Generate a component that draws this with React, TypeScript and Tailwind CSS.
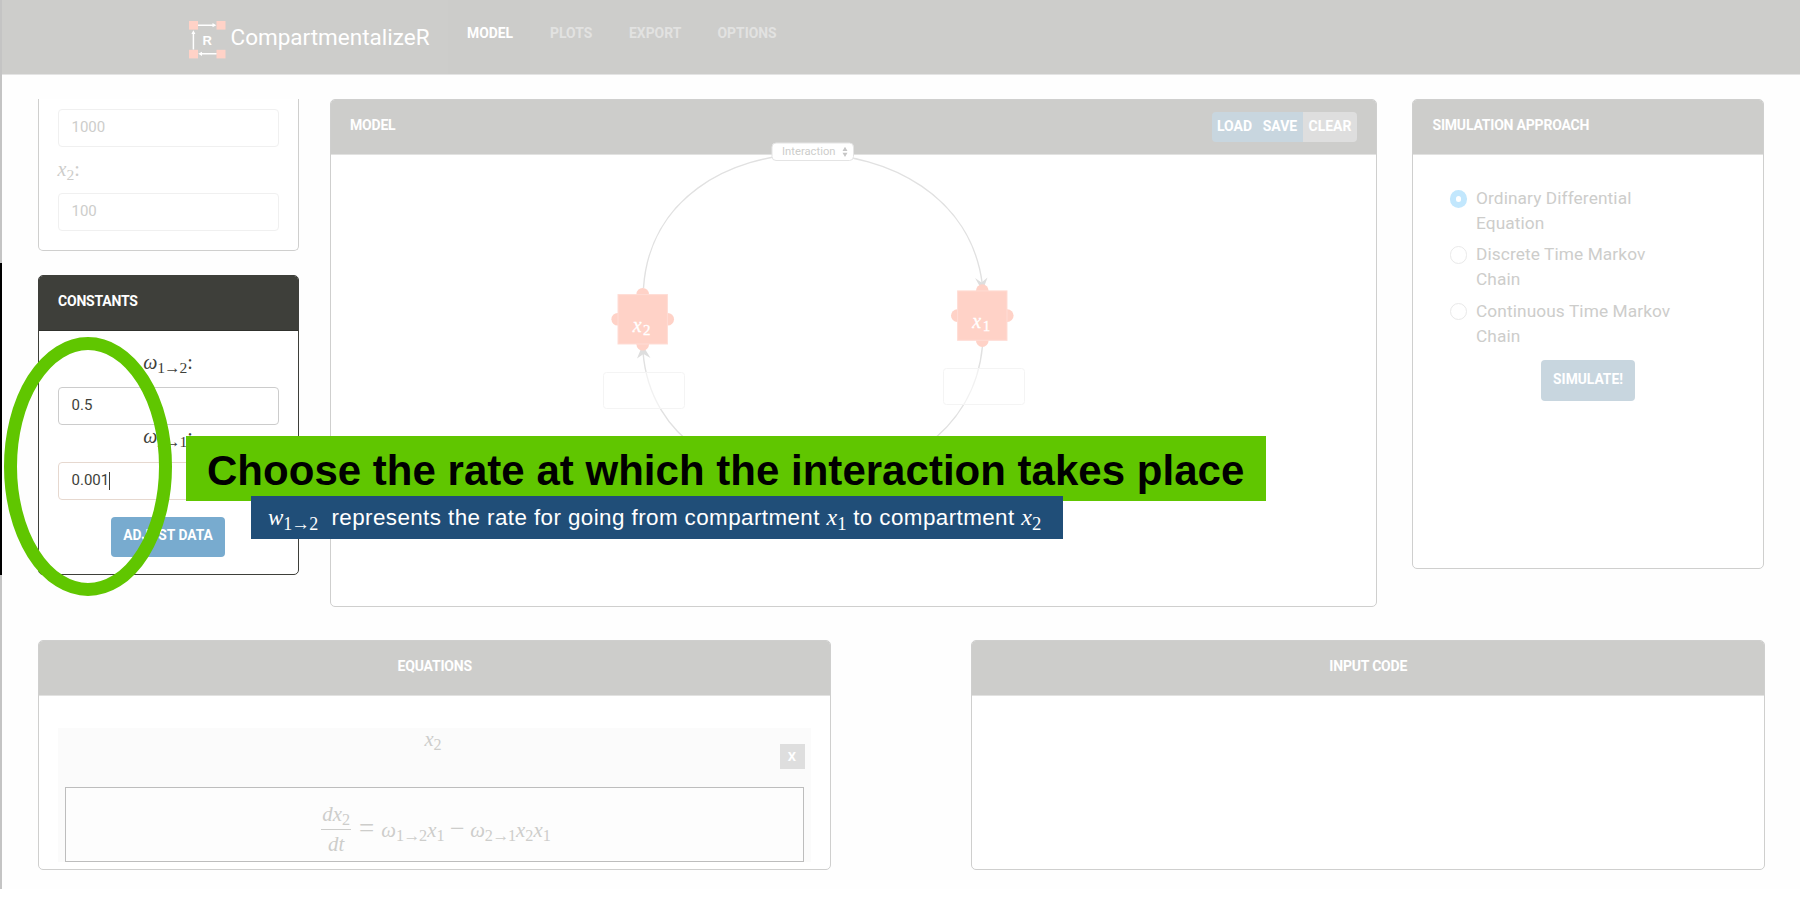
import type { ReactNode } from "react";

const SANS = "font-['Roboto','Liberation_Sans',sans-serif]";
const SERIF = "font-['Liberation_Serif',serif]";
const HELV = "font-['Liberation_Sans',sans-serif]";

function Sym({ base, sub, tail }: { base: string; sub: string; tail?: string }) {
  const [from, to] = sub.split("→");
  return (
    <span className={`${SERIF} whitespace-nowrap tracking-normal`}>
      <i>{base}</i>
      <sub className="text-[78%]">
        {from}
        {to && <span className="-mx-[1px] text-[105%]">→</span>}
        {to}
      </sub>
      {tail}
    </span>
  );
}

function Logo() {
  return (
    <svg width="37" height="38" viewBox="0 0 37 38" className="shrink-0">
      <g fill="#ffd2c7">
        <rect x="0" y="0" width="9" height="8.6" />
        <rect x="27.5" y="0" width="9" height="8.6" />
        <rect x="0" y="28.8" width="9" height="8.6" />
        <rect x="27.5" y="28.8" width="9" height="8.6" />
      </g>
      <g stroke="#fff" strokeWidth="1.5" fill="none">
        <path d="M9 4.2H24M27.5 32.8H13M4.4 28.5V12" />
      </g>
      <g fill="#fff">
        <path d="M23.5 2.1 27.3 4.2 23.5 6.3zM13 30.7 9.2 32.8 13 34.9zM2.4 13 4.4 9.2 6.4 13z" />
      </g>
      <text x="18.2" y="23.8" textAnchor="middle" fontFamily="Liberation Sans" fontWeight="700" fontSize="13" fill="#fff">
        R
      </text>
    </svg>
  );
}

function CardHeader({ children, className = "" }: { children: ReactNode; className?: string }) {
  return (
    <div
      className={`flex h-[55px] shrink-0 items-center border-b border-[#e2e2e1] bg-[#cdcdcb] pr-[18.5px] pl-[19.5px] pb-[3px] text-[14px] font-bold tracking-[-0.2px] text-white ${className}`}
    >
      {children}
    </div>
  );
}

const CARD = "flex flex-col overflow-hidden rounded-[5px] border border-[#cfcfce] bg-white";

function Input({ value, className }: { value: string; className: string }) {
  return (
    <div className={`flex h-[38px] items-center rounded-[4px] border pb-[1px] pl-[13px] text-[15px] ${className}`}>
      {value}
    </div>
  );
}

function Radio({ checked, lines }: { checked?: boolean; lines: string[] }) {
  return (
    <div className="flex h-[56.3px] gap-[9px]">
      {checked ? (
        <span className="mt-[4px] flex size-[17.5px] shrink-0 items-center justify-center rounded-full bg-[#c2e7fd]">
          <span className="size-[5.5px] rounded-full bg-white" />
        </span>
      ) : (
        <span className="mt-[4px] size-[17.5px] shrink-0 rounded-full border border-[#e9e9e9]" />
      )}
      <div className="text-[17.3px] leading-[25px] tracking-[0.1px] text-[#cdcdcb]">
        {lines.map((l) => (
          <div key={l}>{l}</div>
        ))}
      </div>
    </div>
  );
}

function Node({ x, y, sub }: { x: number; y: number; sub: string }) {
  return (
    <g transform={`translate(${x} ${y})`}>
      <g fill="#ffd2c7">
        <circle cx="0" cy="-25" r="6.3" />
        <circle cx="0" cy="25" r="6.3" />
        <circle cx="-25" cy="0" r="6.3" />
        <circle cx="25" cy="0" r="6.3" />
      </g>
      <rect x="-24.7" y="-24.7" width="49.4" height="49.4" fill="#ffd2c7" stroke="#ffdcd5" strokeWidth="1" />
      <g fill="#fff" stroke="#fff" strokeWidth="0.3" fontFamily="Liberation Serif">
        <text x="-10" y="12.5" fontSize="20" fontStyle="italic">x</text>
        <text x="0.4" y="15.8" fontSize="15">{sub}</text>
      </g>
    </g>
  );
}

function Diagram() {
  return (
    <svg width="1045" height="506" viewBox="331 100 1045 506" className="absolute left-0 top-0">
      <g fill="none" stroke="#e1e1e1" strokeWidth="1.4">
        <path d="M643.5 288C655 110 960 110 982.3 284" />
        <path d="M982.5 346C966 523 657 528 643 352" />
      </g>
      <g fill="#dedede">
        <path d="M982.5 291 975 278 981.5 282.5 987.5 277.5z" />
        <path d="M642.5 345 650.5 358 643.5 354 637 358.5z" />
      </g>
      <g fill="#fff" fillOpacity="0.55" stroke="#f4f4f4">
        <rect x="603.5" y="372.5" width="81" height="36" rx="3" />
        <rect x="943.5" y="368.5" width="81" height="36" rx="3" />
      </g>
      <Node x={642.7} y={319.3} sub="2" />
      <Node x={982.3} y={315.6} sub="1" />
      <rect x="772" y="143" width="81.5" height="17.5" rx="4" fill="#fff" stroke="#e4e4e4" />
      <text x="782" y="155" fontFamily="Roboto" fontSize="11.2" fill="#cdcdcb" textLength="53.5">
        Interaction
      </text>
      <path d="M842.5 151 845 146.8 847.5 151zM842.5 152.8 845 157 847.5 152.8z" fill="#c6c6c6" />
    </svg>
  );
}

export default function App() {
  return (
    <div className={`relative h-[912px] w-[1800px] overflow-hidden bg-white ${SANS}`}>
      <div className="flex h-[889px] bg-[#fefefe]">
        <div className="flex w-[1.5px] shrink-0 flex-col bg-[#c4c4c4]">
          <div className="mt-[263px] h-[312px] bg-black" />
        </div>
        <div className="flex min-w-0 flex-1 flex-col">
          <header className="flex h-[75px] shrink-0 border-b border-[#e4e4e4] bg-[#cdcdcb] pl-[187.5px]">
            <div className="flex h-[75px] items-start pt-[21px]">
              <Logo />
              <span className="ml-[4.5px] w-[217.5px] text-[22.5px] leading-[32px] whitespace-nowrap text-white">
                CompartmentalizeR
              </span>
            </div>
            <nav className="flex text-[13.9px] font-bold leading-[16px] text-[#e2e2e1]">
              <a className="w-[82px] bg-[#ccccca] pl-[19px] pt-[25px] text-white">MODEL</a>
              <a className="w-[79px] pl-[20px] pt-[25px]">PLOTS</a>
              <a className="w-[89px] pl-[20px] pt-[25px]">EXPORT</a>
              <a className="pl-[19.5px] pt-[25px]">OPTIONS</a>
            </nav>
          </header>

          <div className="mt-[24px] flex h-[541px] shrink-0 items-start pl-[36px]">
            <div className="flex w-[261px] flex-col">
              <section className="flex h-[152px] flex-col rounded-b-[5px] border border-t-0 border-[#cfcfce] bg-white px-[19px] pt-[10px] text-[#cdcdcb]">
                <Input value="1000" className="border-[#f0f0f0]" />
                <div className="h-[46px] pt-[8px] text-[20px] leading-[28px]">
                  <Sym base="x" sub="2" tail=":" />
                </div>
                <Input value="100" className="border-[#f0f0f0]" />
              </section>
              <section className="mt-[24px] flex h-[300px] flex-col overflow-hidden rounded-[5px] border border-[#3e3f3a] bg-white">
                <div className="flex h-[55px] shrink-0 items-center border-b border-[#30312d] bg-[#3e3f3a] px-[19.5px] pb-[3px] text-[14px] font-bold tracking-[-0.2px] text-white">
                  CONSTANTS
                </div>
                <div className="flex flex-col px-[19px] text-[#3e3f3a]">
                  <div className="h-[56px] pt-[17px] text-center text-[20px] leading-[28px]">
                    <Sym base="ω" sub="1→2" tail=":" />
                  </div>
                  <Input value="0.5" className="border-[#cccccc]" />
                  <div className="-mt-[3px] h-[40px] text-center text-[20px] leading-[28px]">
                    <Sym base="ω" sub="2→1" tail=":" />
                  </div>
                  <div className="flex h-[38px] items-center rounded-[4px] border border-[#e6d8cf] pb-[1px] pl-[13px] text-[15px]">
                    0.001
                    <span className="h-[18px] w-px bg-[#3e3f3a]" />
                  </div>
                  <div className="mt-[17px] flex h-[40px] w-[114px] items-center justify-center self-center rounded-[4px] bg-[#78abcf] pb-[3px] text-[13.8px] font-bold text-white">
                    ADJUST DATA
                  </div>
                </div>
              </section>
            </div>

            <section className={`${CARD} relative ml-[31px] h-[508px] w-[1047px]`}>
              <CardHeader className="justify-between">
                <span>MODEL</span>
                <div className="mt-[3px] flex h-[30px] overflow-hidden rounded-[4px] text-[14px] leading-[29px] tracking-normal">
                  <span className="w-[45px] bg-[#c8d6df] text-center">LOAD</span>
                  <span className="w-[46px] bg-[#c8d6df] text-center">SAVE</span>
                  <span className="w-[54px] bg-[#dedede] text-center">CLEAR</span>
                </div>
              </CardHeader>
              <Diagram />
            </section>

            <section className={`${CARD} ml-[35.5px] h-[470px] w-[352px]`}>
              <CardHeader>SIMULATION APPROACH</CardHeader>
              <div className="flex flex-col pl-[36.5px] pt-[31px]">
                <Radio checked lines={["Ordinary Differential", "Equation"]} />
                <Radio lines={["Discrete Time Markov", "Chain"]} />
                <Radio lines={["Continuous Time Markov", "Chain"]} />
                <div className="ml-[91.5px] mt-[5px] flex h-[41px] w-[94px] items-center justify-center rounded-[4px] bg-[#c8d6df] pb-[3px] text-[13.8px] font-bold text-white">
                  SIMULATE!
                </div>
              </div>
            </section>
          </div>

          <div className="flex shrink-0 gap-[140px] pl-[36px]">
            <section className={`${CARD} h-[230px] w-[793.5px]`}>
              <CardHeader className="justify-center">EQUATIONS</CardHeader>
              <div className="mx-[19px] mt-[32px] flex h-[134px] flex-col bg-[#fbfbfb] px-[7px] text-[#cdcdcb]">
                <div className="flex h-[59px] items-start justify-end">
                  <div className="-mt-[2px] flex-1 pl-[22px] text-center text-[20.6px] leading-[26px]">
                    <Sym base="x" sub="2" />
                  </div>
                  <span className="mt-[16px] -mr-[0.5px] h-[25px] w-[25px] bg-[#dedede] text-center text-[13px] font-bold leading-[26px] text-white">
                    X
                  </span>
                </div>
                <div className="flex h-[75px] items-center justify-center border border-[#bdbdbd] bg-[#fdfdfd] pl-[3px] pt-[8px] text-[20.8px]">
                  <div className={`flex flex-col items-center leading-[28px] ${SERIF}`}>
                    <span className="h-[30px] border-b-[1.5px] border-[#cdcdcb] px-[1.5px]">
                      <i>dx</i>
                      <sub className="text-[78%]">2</sub>
                    </span>
                    <i className="h-[28px]">dt</i>
                  </div>
                  <div className={`pl-[7.5px] whitespace-nowrap ${SERIF}`}>
                    <span className="pr-[7px] text-[27px]">=</span>
                    <Sym base="ω" sub="1→2" />
                    <Sym base="x" sub="1" />
                    <span className="px-[5.5px] text-[26px]">−</span>
                    <Sym base="ω" sub="2→1" />
                    <Sym base="x" sub="2" />
                    <Sym base="x" sub="1" />
                  </div>
                </div>
              </div>
            </section>
            <section className={`${CARD} h-[230px] w-[793.5px]`}>
              <CardHeader className="justify-center">INPUT CODE</CardHeader>
            </section>
          </div>
        </div>
      </div>

      <svg width="180" height="270" viewBox="0 332 180 270" className="absolute left-0 top-[332px]">
        <ellipse cx="88" cy="466.5" rx="77.5" ry="123" fill="none" stroke="#60c600" strokeWidth="13" />
      </svg>
      <div
        className={`absolute left-[186px] top-[436px] flex h-[65px] w-[1080px] items-center bg-[#60c600] pl-[21px] pt-[4px] text-[42px] font-bold tracking-[0.02px] whitespace-nowrap text-black ${HELV}`}
      >
        Choose the rate at which the interaction takes place
      </div>
      <div
        className={`absolute left-[251px] top-[496px] flex h-[43px] w-[812px] items-center bg-[#204e78] pl-[17px] text-[22.4px] tracking-[0.42px] whitespace-pre text-white ${HELV}`}
      >
        <span>
          <span className="text-[23px]"><Sym base="w" sub="1→2" /></span>
          {"  represents the rate for going from compartment "}
          <span className="text-[24px]"><Sym base="x" sub="1" /></span>
          {" to compartment "}
          <span className="text-[24px]"><Sym base="x" sub="2" /></span>
        </span>
      </div>
    </div>
  );
}
